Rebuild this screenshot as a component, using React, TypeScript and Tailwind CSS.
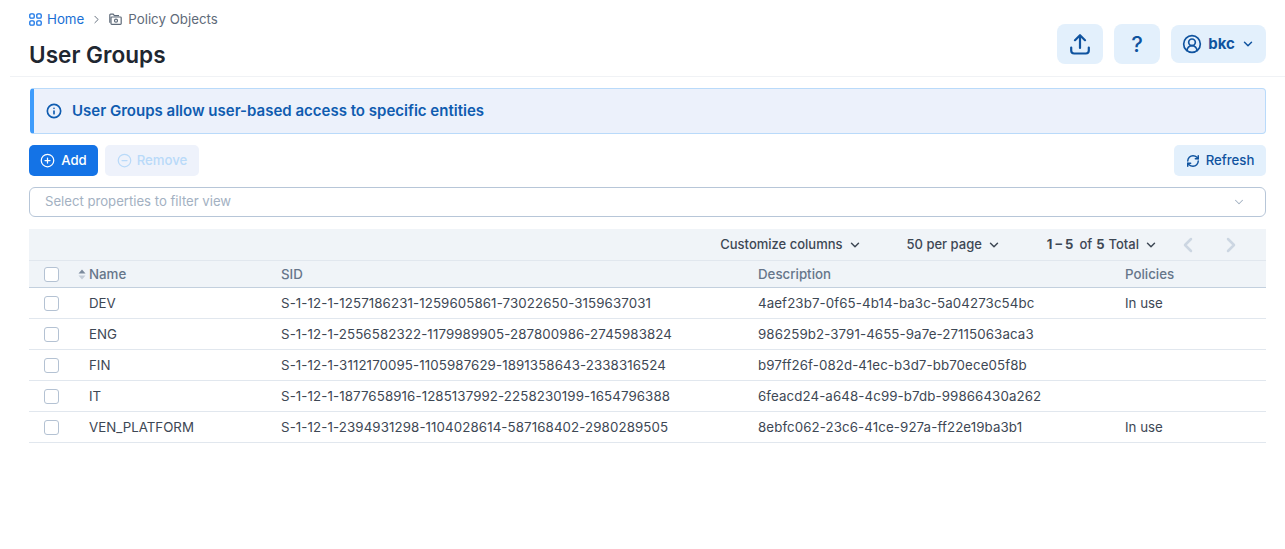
import { ChevronDown, ChevronLeft, ChevronRight, CircleMinus, CirclePlus, CircleUserRound, Info, RefreshCw } from "lucide-react";

const rows = [
  { name: "DEV", sid: "S-1-12-1-1257186231-1259605861-73022650-3159637031", description: "4aef23b7-0f65-4b14-ba3c-5a04273c54bc", policies: "In use" },
  { name: "ENG", sid: "S-1-12-1-2556582322-1179989905-287800986-2745983824", description: "986259b2-3791-4655-9a7e-27115063aca3", policies: "" },
  { name: "FIN", sid: "S-1-12-1-3112170095-1105987629-1891358643-2338316524", description: "b97ff26f-082d-41ec-b3d7-bb70ece05f8b", policies: "" },
  { name: "IT", sid: "S-1-12-1-1877658916-1285137992-2258230199-1654796388", description: "6feacd24-a648-4c99-b7db-99866430a262", policies: "" },
  { name: "VEN_PLATFORM", sid: "S-1-12-1-2394931298-1104028614-587168402-2980289505", description: "8ebfc062-23c6-41ce-927a-ff22e19ba3b1", policies: "In use" },
];

function Checkbox() {
  return <span className="block h-[15px] w-[15px] rounded-[3px] border border-[#b4c2d3] bg-white" />;
}

export default function App() {
  return (
    <div className="min-h-[549px] bg-white font-['Inter',sans-serif] text-[#2b343f]">
      {/* Header */}
      <header className="ml-[10px] flex h-[77px] justify-between border-b border-[#f0f2f5] px-[19px]">
        <div className="pt-[11px]">
          <nav className="flex h-[16px] items-center text-[13.3px] leading-4">
            <svg className="text-[#1473e6]" width="13" height="13" viewBox="0 0 13 13" fill="none" stroke="currentColor" strokeWidth="1.3">
              <rect x="0.8" y="0.8" width="4.4" height="4.4" rx="1.2" />
              <rect x="7.8" y="0.8" width="4.4" height="4.4" rx="1.2" />
              <rect x="0.8" y="7.8" width="4.4" height="4.4" rx="1.2" />
              <rect x="7.8" y="7.8" width="4.4" height="4.4" rx="1.2" />
            </svg>
            <span className="ml-[5px] text-[#1a6fd4]">Home</span>
            <ChevronRight className="ml-[6px] h-[13px] w-[13px] text-[#5f6b7a]" strokeWidth={1.75} />
            <svg className="ml-[6px] text-[#5f6b7a]" width="13" height="13" viewBox="0 0 13 13" fill="none" stroke="currentColor" strokeWidth="1.2">
              <path d="M0.8 9.8 V2 A0.8 0.8 0 0 1 1.6 1.2 H4.2 L5.4 2.6 H10" />
              <path d="M2.8 11.4 A0.8 0.8 0 0 1 2 10.6 V4.8 A0.8 0.8 0 0 1 2.8 4 H11.4 A0.8 0.8 0 0 1 12.2 4.8 V10.6 A0.8 0.8 0 0 1 11.4 11.4 Z" />
              <circle cx="7" cy="7.7" r="1.5" />
            </svg>
            <span className="ml-[6px] text-[#5f6b7a]">Policy Objects</span>
          </nav>
          <h1 className="mt-[12px] text-[22.6px] font-semibold leading-[32px] text-[#1f2731]">User Groups</h1>
        </div>
        <div className="flex items-start pt-[24px]">
          <button className="flex h-[40px] w-[46px] items-center justify-center rounded-lg bg-[#e3f0fc] text-[#0f539f]">
            <svg width="20" height="21" viewBox="0 0 20 21" fill="none" stroke="currentColor" strokeWidth="2.2" strokeLinecap="round" strokeLinejoin="round">
              <path d="M10 14 V1.5 M5 6.2 L10 1.2 L15 6.2" />
              <path d="M1.2 13.5 V16.5 A3 3 0 0 0 4.2 19.5 H15.8 A3 3 0 0 0 18.8 16.5 V13.5" />
            </svg>
          </button>
          <button className="ml-[11px] flex h-[40px] w-[46px] items-center justify-center rounded-lg bg-[#e3f0fc] text-[22px] font-medium text-[#0f539f]">
            ?
          </button>
          <button className="ml-[11px] mt-[1px] flex h-[38px] w-[95px] items-center justify-center rounded-lg bg-[#e3f0fc] text-[15px] font-bold text-[#0f539f]">
            <CircleUserRound className="h-[20px] w-[20px]" strokeWidth={2} />
            <span className="ml-[6px]">bkc</span>
            <ChevronDown className="ml-[6px] h-[14px] w-[14px]" strokeWidth={2.5} />
          </button>
        </div>
      </header>

      <main className="pl-[29px] pr-[19px]">
        {/* Info banner */}
        <div className="ml-[1px] mt-[11px] flex h-[46px] items-center rounded-[4px] border border-l-[4px] border-[#b9dafa] border-l-[#3f9cfb] bg-[#ecf1fb] pl-[12px] text-[#0f5cb0]">
          <Info className="h-[16px] w-[16px]" strokeWidth={2.5} />
          <span className="ml-[10px] text-[15.03px] font-semibold">User Groups allow user-based access to specific entities</span>
        </div>

        {/* Actions */}
        <div className="mt-[11px] flex h-[31px] items-center">
          <button className="flex h-[31px] w-[69px] items-center justify-center gap-[6px] rounded-[5px] bg-[#1473e6] text-[13.2px] font-medium text-white">
            <CirclePlus className="h-[15px] w-[15px]" strokeWidth={2} />
            Add
          </button>
          <button className="ml-[7px] flex h-[31px] w-[94px] items-center justify-center gap-[5px] rounded-[5px] bg-[#eef2fb] text-[13.2px] font-medium text-[#b9daf9]">
            <CircleMinus className="h-[15px] w-[15px]" strokeWidth={2} />
            Remove
          </button>
          <button className="ml-auto flex h-[31px] w-[92px] items-center justify-center gap-[6px] rounded-[5px] bg-[#e3f0fc] text-[13.2px] font-medium text-[#0f539f]">
            <RefreshCw className="h-[14px] w-[14px]" strokeWidth={2.5} />
            Refresh
          </button>
        </div>

        {/* Filter */}
        <div className="mt-[11px] flex h-[30px] items-center justify-between rounded-[6px] border border-[#b7c6d8] pl-[15px] pr-[19px] text-[13.15px] text-[#a3b1c2]">
          <span>Select properties to filter view</span>
          <ChevronDown className="h-[14px] w-[14px]" strokeWidth={1.75} />
        </div>

        {/* Table */}
        <div className="mt-[12px]">
          <div className="flex h-[32px] items-center justify-end border-b border-[#e1e7ee] bg-[#f0f4f8] pr-[23px] text-[13px] font-medium text-[#3d4754]">
            <span className="flex items-center">Customize columns<ChevronDown className="ml-[5px] h-[14px] w-[14px]" strokeWidth={2.5} /></span>
            <span className="ml-[45px] flex items-center">50 per page<ChevronDown className="ml-[5px] h-[14px] w-[14px]" strokeWidth={2.5} /></span>
            <span className="ml-[46px] flex items-center"><b className="font-bold">1 – 5</b><span className="ml-[6px]">of</span><b className="ml-[4px] font-bold">5</b><span className="ml-[4px]">Total</span><ChevronDown className="ml-[5px] h-[14px] w-[14px]" strokeWidth={2.5} /></span>
            <ChevronLeft className="ml-[18px] h-[24px] w-[24px] text-[#ccd6e2]" strokeWidth={2.5} />
            <ChevronRight className="ml-[19px] h-[24px] w-[24px] text-[#ccd6e2]" strokeWidth={2.5} />
          </div>
          <div className="grid h-[27px] grid-cols-[60px_192px_477px_367px_1fr] items-center border-b border-[#c3d0de] bg-[#f0f4f8] text-[13.3px] font-medium text-[#66768a]">
            <span className="relative pl-[15px]">
              <Checkbox />
              <svg className="absolute left-[49px] top-[2px]" width="8" height="11" viewBox="0 0 8 11">
                <path d="M4 0.5 L7.5 4.5 H0.5 Z" fill="#7b8a9c" />
                <path d="M4 10.5 L7.5 6.5 H0.5 Z" fill="#c3ccd7" />
              </svg>
            </span>
            <span className="pt-[1px]">Name</span>
            <span className="pt-[1px]">SID</span>
            <span className="pt-[1px]">Description</span>
            <span className="pt-[1px]">Policies</span>
          </div>
          {rows.map((r) => (
            <div key={r.name} className="grid h-[31px] grid-cols-[60px_192px_477px_367px_1fr] items-center border-b border-[#e1e7ee] text-[13.3px] text-[#3d4754]">
              <span className="pl-[15px]"><Checkbox /></span>
              <span className="pt-[1px]">{r.name}</span>
              <span className="pt-[1px] tracking-[0.1px]">{r.sid}</span>
              <span className="pt-[1px] tracking-[0.1px]">{r.description}</span>
              <span className="pt-[1px]">{r.policies}</span>
            </div>
          ))}
        </div>
      </main>
    </div>
  );
}
